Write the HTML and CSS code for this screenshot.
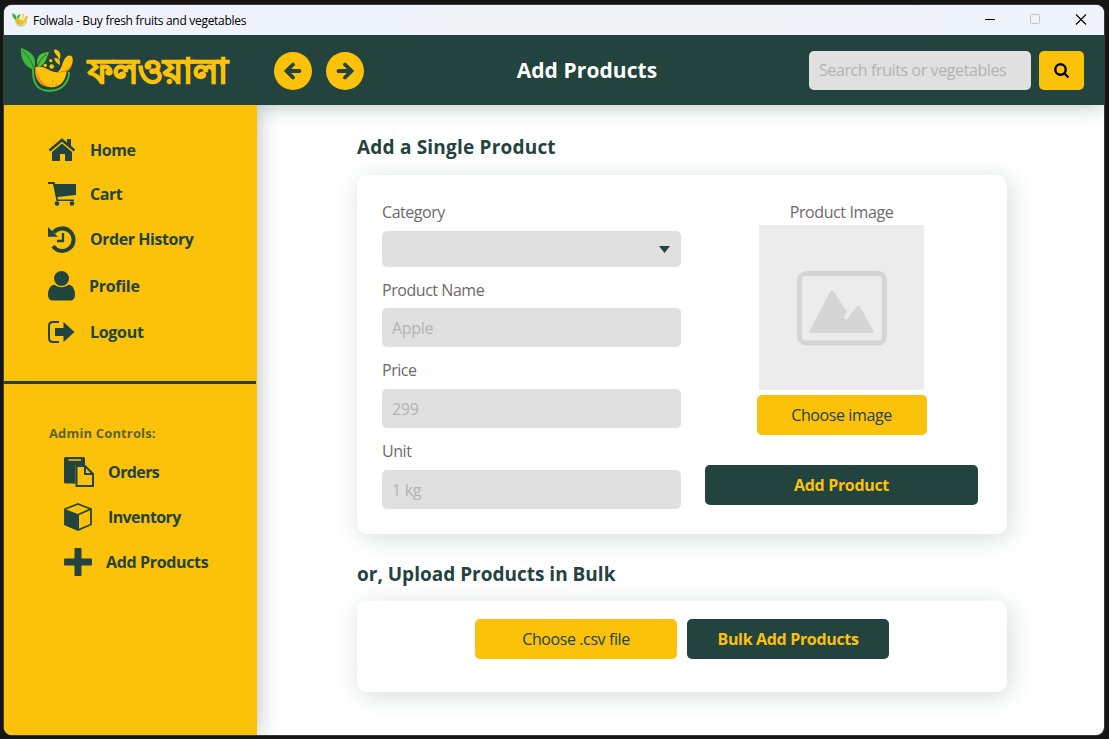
FILE: index.html
```html
<!DOCTYPE html>
<html lang="en">
<head>
<meta charset="utf-8">
<title>Folwala - Buy fresh fruits and vegetables</title>
<link rel="stylesheet" href="styles.css">
</head>
<body>
<svg class="defs" width="0" height="0">
  <symbol id="logo" viewBox="15 18 165 144">
    <path d="M55 80C53 118 60 150 100 152c38 2 66-22 65-58" fill="none" stroke="#3fb83a" stroke-width="6"/>
    <path d="M18 20c22 10 46 20 43 52l-4 16C30 78 16 58 18 20z" fill="#3fb83a"/>
    <path d="M24 30c14 14 26 30 34 56" fill="none" stroke="#23433e" stroke-width="2"/>
    <path d="M104 33C78 34 62 46 68 78 92 76 94 56 104 33z" fill="#52c234"/>
    <path d="M97 40C82 50 72 62 64 88" fill="none" stroke="#23433e" stroke-width="2.500"/>
    <path d="M62 80c12-6 26 0 38 6 20 12 38 10 58 7-4 32-24 49-48 48-32 0-52-22-48-61z" fill="#fcc20a"/>
    <path d="M62 80c-4 38 18 62 50 61-20-5-39-18-50-61z" fill="#f58a1f"/>
    <path d="M130 94c16-8 14-42 32-49 16-4 16 12 13 23-5 18-24 29-45 26z" fill="#fcc20a"/>
    <path d="M174 54c4 22-12 38-36 40 26 8 42-18 36-40z" fill="#f58a1f"/>
    <path d="M119 29c0-8 16-2 19 10 2 9-1 15-3 19-3-14-15-17-16-29z" fill="#fcc20a"/>
    <path d="M120 51c16 1 18 9 17 22-10-5-17-12-17-22z" fill="#fcc20a"/>
    <g fill="#fcc20a"><circle cx="109" cy="60" r="5"/><circle cx="92" cy="74" r="5"/><circle cx="112" cy="78" r="7"/></g>
    <g fill="#f58a1f"><circle cx="116" cy="122" r="3"/><circle cx="127" cy="134" r="3"/><circle cx="114" cy="134" r="3"/></g>
  </symbol>
</svg>
<div class="window">
  <div class="titlebar">
    <svg class="app-icon"><use href="#logo"/></svg>
    <span class="app-title">Folwala - Buy fresh fruits and vegetables</span>
    <svg class="controls" viewBox="0 0 120 30" fill="none">
      <path d="M1 14.500h10" stroke="#000"/>
      <rect x="46.500" y="9.500" width="9" height="9" rx="1" stroke="#c3c4c8"/>
      <path d="M92 9.500l10 10M102 9.500l-10 10" stroke="#000" stroke-width="1.100"/>
    </svg>
  </div>
  <header class="header">
    <svg class="logo"><use href="#logo"/></svg>
    <span class="wordmark" lang="bn">ফলওয়ালা</span>
    <button class="round"><svg viewBox="0 0 18 18"><path d="M15.500 9H4M9 2.500L2.500 9 9 15.500"/></svg></button>
    <button class="round"><svg viewBox="0 0 18 18"><path d="M2.500 9H14M9 2.500L15.500 9 9 15.500"/></svg></button>
    <h1 class="page-title">Add Products</h1>
    <input class="search" placeholder="Search fruits or vegetables">
    <button class="search-btn"><svg viewBox="0 0 16 16"><circle cx="6.500" cy="6.500" r="5.200"/><path d="M10.500 10.500l4 4"/></svg></button>
  </header>
  <div class="body">
    <nav class="sidebar">
      <a class="item home"><svg viewBox="0 0 28 24"><path d="M1.500 12.500L14 2l12.500 10.500" fill="none" stroke="#23433e" stroke-width="2.500"/><path d="M19 1h4v8l-4-3.500zM14 5.500l10 8.500v9h-7v-7h-5v7H4v-9z"/></svg>Home</a>
      <a class="item"><svg viewBox="0 0 28 24"><path d="M0 0h6.500l.7 2H28v11L9.500 15l.5 2.500h16V19H8.500L5 2H0z"/><circle cx="9" cy="21.500" r="2.300"/><circle cx="24" cy="21.500" r="2.300"/></svg>Cart</a>
      <a class="item history"><svg viewBox="0 0 28 28"><path d="M5.500 7.500A11.300 11.300 0 1 1 5 21.200" fill="none" stroke="#23433e" stroke-width="4"/><path d="M0 2v9.800h9.800z"/><path d="M15 8v8H9" fill="none" stroke="#23433e" stroke-width="2.300"/></svg>Order History</a>
      <a class="item profile"><svg viewBox="0 0 27 30"><circle cx="13.500" cy="7.500" r="7.500"/><path d="M6.500 13.700c4 3.300 10 3.300 14 0 4.500.5 6.500 5 6.500 10.300 0 3.500-2 5.500-5 5.500H5c-3 0-5-2-5-5.500 0-5.300 2-9.800 6.500-10.300z"/></svg>Profile</a>
      <a class="item logout"><svg viewBox="0 0 28 22"><path d="M11 1H5Q1 1 1 5v12q0 4 4 4h6" fill="none" stroke="#23433e" stroke-width="2"/><path d="M7 7h8.500V1L26.500 11 15.500 21v-6H7z"/></svg>Logout</a>
      <hr class="rule">
      <p class="admin">Admin Controls:</p>
      <a class="item sub orders"><svg viewBox="0 0 30 30"><path d="M1.500 0h18q1.500 0 1.500 1.500V8h-9.500v18.500h-10Q0 26.500 0 25V1.500Q0 0 1.500 0z"/><path d="M4.500 3h12.500" stroke="#fcc20a" stroke-width="1.500"/><path d="M12.500 9H21l8 8v12H12.500zM21 9v8h8" fill="#fcc20a" stroke="#23433e" stroke-width="2"/></svg>Orders</a>
      <a class="item sub inventory"><svg viewBox="0 0 28 28"><path d="M14 1l13 5v15.500L14 27 1 21.500V6z" fill="none" stroke="#23433e" stroke-width="1.800"/><path d="M1 6l14 5.500V27L1 21.500z"/><path d="M14.500 11.500L27 6" stroke="#23433e" stroke-width="1.800"/></svg>Inventory</a>
      <a class="item sub add"><svg viewBox="0 0 28 28"><path d="M11.500 0h5q1 0 1 1v9.500H27q1 0 1 1v5q0 1-1 1h-9.500V27q0 1-1 1h-5q-1 0-1-1v-9.500H1q-1 0-1-1v-5q0-1 1-1h9.500V1q0-1 1-1z"/></svg>Add Products</a>
    </nav>
    <main class="main">
      <h2 class="heading single-heading">Add a Single Product</h2>
      <section class="card product">
        <div class="fields">
          <label class="label">Category</label>
          <div class="select"><svg viewBox="0 0 11 7"><path d="M0 0h11L5.500 7z"/></svg></div>
          <label class="label name">Product Name</label>
          <input class="input" placeholder="Apple">
          <label class="label">Price</label>
          <input class="input" placeholder="299">
          <label class="label">Unit</label>
          <input class="input" placeholder="1 kg">
        </div>
        <div class="image-col">
          <span class="image-label">Product Image</span>
          <div class="placeholder"><svg viewBox="0 0 90 75"><rect x="2.500" y="2.500" width="85" height="69.500" rx="6.500" fill="none" stroke="#d5d5d5" stroke-width="5"/><path d="M35 20.500L14 60.500H75L61.500 36 51 48.500 48 44.500 49 42z" fill="#d5d5d5" stroke="#d5d5d5" stroke-width="3" stroke-linejoin="round"/><path d="M51.500 42l-2.500 4.500" stroke="#ececec" stroke-width="4" stroke-linecap="round"/></svg></div>
          <button class="btn yellow pick">Choose image</button>
          <button class="btn green submit">Add Product</button>
        </div>
      </section>
      <h2 class="heading bulk-heading">or, Upload Products in Bulk</h2>
      <section class="card bulk">
        <button class="btn yellow csv">Choose .csv file</button>
        <button class="btn green bulk-btn">Bulk Add Products</button>
      </section>
    </main>
  </div>
</div>
</body>
</html>
```
FILE: styles.css
```css
* { box-sizing: border-box; }
body {
  margin: 0; width: 1109px; height: 739px; padding: 5px 5px 4px 4px;
  background: #161616; overflow: hidden;
  font-family: "Open Sans", "Noto Sans", sans-serif; font-size: 16px; color: #23433e;
}
button, input { font: inherit; border: 0; padding: 0; margin: 0; color: inherit; }
svg { display: block; flex: none; }
.defs { position: absolute; }
.window {
  width: 1100px; height: 730px; border-radius: 8px; overflow: hidden; background: #fff;
  display: flex; flex-direction: column; box-shadow: 0 0 0 1px #3a3a3a;
}
.titlebar {
  height: 30px; flex: none; display: flex; align-items: center; padding-left: 8px;
  position: relative; z-index: 4;
  background: linear-gradient(90deg, #eff3fb 36%, #f2f3f7 42%, #f2f3f7 70%, #eff3fb 88%);
}
.app-icon { width: 16px; height: 14px; }
.app-title { margin-left: 5px; font-size: 12px; color: #000; letter-spacing: -0.29px; }
.controls { width: 120px; height: 30px; margin-left: auto; }
.header {
  height: 70px; flex: none; display: flex; align-items: center; padding: 0 20px 0 16px;
  background: #23433e; position: relative; z-index: 2; box-shadow: 0 0 20px rgba(35, 67, 62, .35);
}
.logo { width: 54px; height: 47px; }
.wordmark {
  width: 140px; margin: 0 46px 0 14px; font-size: 34px; font-weight: 700; line-height: 40px;
  color: #fcc20a; white-space: nowrap; -webkit-text-stroke: 1.4px #fcc20a;
}
.round {
  width: 38px; height: 38px; border-radius: 50%; background: #fcc20a; margin: 1px 14px 0 0; flex: none;
  display: flex; align-items: center; justify-content: center;
}
.round svg { width: 18px; height: 18px; fill: none; stroke: #23433e; stroke-width: 3.8; stroke-linecap: round; }
.page-title { width: 160px; margin: 0 0 0 129px; text-align: center; font-size: 21px; font-weight: 700; line-height: 30px; color: #fff; white-space: nowrap; letter-spacing: .08px; }
.search { width: 222px; height: 39px; margin-left: auto; padding: 0 10px; border-radius: 5px; background: #e0e0e0; letter-spacing: -0.4px; }
input::placeholder { color: #b3b3b3; opacity: 1; }
.search-btn { width: 45px; height: 39px; margin-left: 8px; border-radius: 5px; background: #fcc20a; display: flex; align-items: center; justify-content: center; }
.search-btn svg { width: 16px; height: 16px; margin-top: 1px; fill: none; stroke: #000; stroke-width: 2.4; }
.body { flex: 1; display: flex; }
.sidebar {
  width: 253px; flex: none; padding-top: 23px; background: #fcc20a; position: relative; z-index: 3;
  box-shadow: 0 0 20px rgba(35, 67, 62, .35); clip-path: inset(0 -30px 0 0);
}
.item { height: 44px; padding-left: 44px; display: flex; align-items: center; gap: 14px; font-weight: 700; letter-spacing: -0.45px; fill: #23433e; white-space: nowrap; }
.item svg { width: 28px; height: 24px; }
.item.history { height: 46px; }
.item.history svg { height: 28px; }
.item.profile { height: 48px; letter-spacing: -0.3px; }
.item.profile svg { width: 27px; height: 30px; }
.item.logout { letter-spacing: -0.3px; }
.item.logout svg { height: 22px; }
.rule { height: 3px; margin: 27px 1px 0 0; border: 0; background: #23433e; }
.admin { margin: 39px 0 6px 45px; font-size: 13px; line-height: 20px; font-weight: 700; color: #5f622b; letter-spacing: .15px; }
.item.sub { height: 45px; padding-left: 60px; gap: 14px; }
.item.sub svg { width: 28px; height: 28px; }
.item.orders svg { width: 30px; height: 30px; }
.item.orders, .item.inventory { letter-spacing: -0.6px; }
.item.inventory { gap: 16px; }
.item.add { letter-spacing: -0.35px; }
.main { flex: 1; padding: 27px 97px 0 100px; }
.heading { margin: 0; font-size: 19px; line-height: 30px; font-weight: 700; white-space: nowrap; }
.single-heading { margin-bottom: 13px; letter-spacing: .2px; }
.card { border-radius: 10px; background: #fff; box-shadow: 3px 4px 24px rgba(35, 67, 62, .18); }
.product { height: 359px; display: flex; padding: 25px; gap: 24px; }
.fields { width: 299px; display: flex; flex-direction: column; }
.label { line-height: 24px; margin-bottom: 7px; color: #6b6b6b; letter-spacing: -0.45px; }
.select { flex: none; height: 36px; margin-bottom: 11px; padding-right: 11px; border-radius: 5px; background: #e0e0e0; display: flex; align-items: center; justify-content: flex-end; }
.select svg { width: 11px; height: 7px; fill: #23433e; }
.input { flex: none; height: 39px; margin-bottom: 11px; padding: 0 10px; border-radius: 5px; background: #e0e0e0; letter-spacing: -0.3px; }
.label.name { margin-bottom: 6px; }
.image-col { width: 273px; display: flex; flex-direction: column; align-items: center; }
.image-label { line-height: 25px; color: #6b6b6b; letter-spacing: -0.4px; }
.placeholder { width: 165px; height: 165px; background: #ececec; display: flex; align-items: center; justify-content: center; }
.placeholder svg { width: 90px; height: 75px; margin-top: 1px; }
.btn { height: 40px; border-radius: 5px; text-align: center; white-space: nowrap; letter-spacing: -0.4px; padding-bottom: 1px; }
.yellow { background: #fcc20a; }
.green { background: #23433e; color: #fcc20a; font-weight: 700; letter-spacing: -0.33px; }
.pick { width: 170px; margin-top: 5px; }
.submit { width: 273px; margin-top: 30px; }
.bulk-heading { margin: 25px 0 12px; }
.bulk { height: 91px; padding-top: 18px; display: flex; justify-content: center; gap: 10px; }
.csv, .bulk-btn { width: 202px; }
```
